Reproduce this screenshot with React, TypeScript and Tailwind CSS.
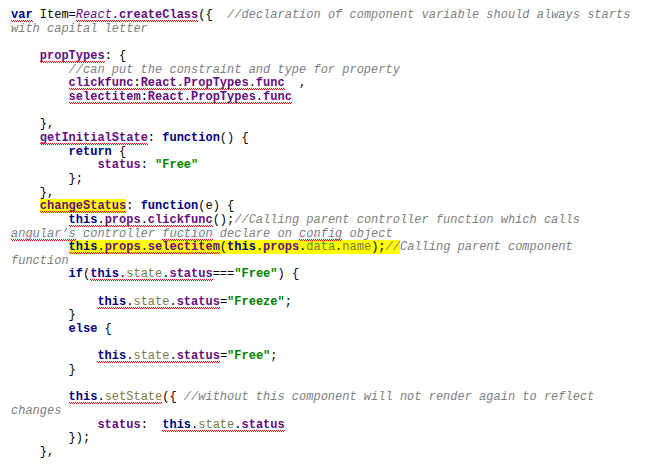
import type { ReactNode } from 'react';

const K = ({ children }: { children: ReactNode }) => <span className="font-bold text-[#000080]">{children}</span>;
const P = ({ children }: { children: ReactNode }) => <span className="font-bold text-[#660e7a]">{children}</span>;
const I = ({ children }: { children: ReactNode }) => <span className="italic text-[#660e7a]">{children}</span>;
const S = ({ children }: { children: ReactNode }) => <span className="font-bold text-[#008000]">{children}</span>;
const C = ({ children }: { children: ReactNode }) => <span className="italic text-[#808080]">{children}</span>;
const O = ({ children }: { children: ReactNode }) => <span className="text-[#7a7a43]">{children}</span>;
// red spell-check squiggle, drawn as a two-row zigzag under the word
const U = ({ children }: { children: ReactNode }) => (
  <span className="relative after:absolute after:left-0 after:right-0 after:top-[12px] after:h-[2px] after:[background:linear-gradient(90deg,#f00_50%,transparent_50%)_0_0/2px_1px_repeat-x,linear-gradient(90deg,transparent_50%,#f00_50%)_0_1px/2px_1px_repeat-x]">
    {children}
  </span>
);
const H = ({ children }: { children: ReactNode }) => <span className="bg-[#ffff00]">{children}</span>;

function Line({ children }: { children?: ReactNode }) {
  return <div className="h-[13.66px] leading-[13.66px] whitespace-pre">{children}</div>;
}

export default function App() {
  return (
    <div className="w-[672px] h-[470px] overflow-hidden bg-white pl-[11px] pt-[9px] text-[12px] text-black font-['Liberation_Mono','Courier_New',monospace]">
      <Line>
        <U><K>var</K></U>{' Item='}<U><I>React</I><P>.createClass</P></U>{'({  '}<C>{'//declaration of component variable should always starts'}</C>
      </Line>
      <Line><C>with capital letter</C></Line>
      <Line />
      <Line>
        {'    '}<U><P>propTypes</P></U>{': {'}
      </Line>
      <Line>{'        '}<C>{'//can put the constraint and type for property'}</C></Line>
      <Line>
        {'        '}<U><P>clickfunc</P>:<P>React</P>.<P>PropTypes</P>.<P>func</P></U>{'  ,'}
      </Line>
      <Line>
        {'        '}<U><P>selectitem</P>:<P>React</P>.<P>PropTypes</P>.<P>func</P></U>
      </Line>
      <Line />
      <Line>{'    },'}</Line>
      <Line>
        {'    '}<U><P>getInitialState</P></U>{': '}<K>function</K>{'() {'}
      </Line>
      <Line>{'        '}<K>return</K>{' {'}</Line>
      <Line>
        {'            '}<P>status</P>{': '}<S>"Free"</S>
      </Line>
      <Line>{'        };'}</Line>
      <Line>{'    },'}</Line>
      <Line>
        {'    '}<H><U><P>changeStatus</P></U></H>{': '}<K>function</K>{'(e) {'}
      </Line>
      <Line>
        {'        '}<U><K>this</K>.<P>props</P>.<P>clickfunc</P></U>{'();'}<C>{'//Calling parent controller function which calls'}</C>
      </Line>
      <Line>
        <C><U>angular’s</U>{' controller '}<U>fuction</U>{' declare on '}<U>config</U>{' object'}</C>
      </Line>
      <Line>
        {'        '}
        <H>
          <U><K>this</K>.<P>props</P>.<P>selectitem</P></U>(<K>this</K>.<P>props</P>.<O>data</O>.<O>name</O>{');'}<C>{'//'}</C>
        </H>
        <C>Calling parent component</C>
      </Line>
      <Line><C>function</C></Line>
      <Line>
        {'        '}<K>if</K>(<U><K>this</K>.<O>state</O>.<P>status</P></U>===<S>"Free"</S>{') {'}
      </Line>
      <Line />
      <Line>
        {'            '}<U><K>this</K>.<O>state</O>.<P>status</P></U>=<S>"Freeze"</S>;
      </Line>
      <Line>{'        }'}</Line>
      <Line>{'        '}<K>else</K>{' {'}</Line>
      <Line />
      <Line>
        {'            '}<U><K>this</K>.<O>state</O>.<P>status</P></U>=<S>"Free"</S>;
      </Line>
      <Line>{'        }'}</Line>
      <Line />
      <Line>
        {'        '}<U><K>this</K>.<O>setState</O></U>{'({ '}<C>{'//without this component will not render again to reflect'}</C>
      </Line>
      <Line><C>changes</C></Line>
      <Line>
        {'            '}<P>status</P>{':  '}<U><K>this</K>.<O>state</O>.<P>status</P></U>
      </Line>
      <Line>{'        });'}</Line>
      <Line>{'    },'}</Line>
    </div>
  );
}
